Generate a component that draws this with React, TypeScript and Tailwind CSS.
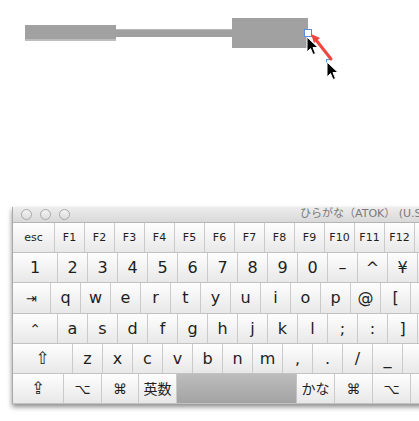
import type { ReactNode } from 'react'

type KeyDef = { w: string; label?: ReactNode; size?: string; kind?: 'space' }

const font = "font-['DejaVu_Sans','Noto_Sans_CJK_JP',sans-serif]"

const fRow: KeyDef[] = [
  { w: 'w-[42px]', label: 'esc' },
  ...['F1', 'F2', 'F3', 'F4', 'F5', 'F6', 'F7', 'F8', 'F9', 'F10', 'F11', 'F12', ''].map((l) => ({ w: 'w-[30px]', label: l })),
]

const numRow: KeyDef[] = [
  { w: 'w-[45px]', label: '1' },
  ...['2', '3', '4', '5', '6', '7', '8', '9', '0', '–', '^', '¥', ''].map((l) => ({ w: 'w-[30px]', label: l })),
]

const qRow: KeyDef[] = [
  { w: 'w-[38px]', label: '⇥', size: 'text-[13px]' },
  ...['q', 'w', 'e', 'r', 't', 'y', 'u', 'i', 'o', 'p', '@', '[', ''].map((l) => ({ w: 'w-[30px]', label: l })),
]

const aRow: KeyDef[] = [
  { w: 'w-[45px]', label: '⌃', size: 'text-[14px]' },
  ...['a', 's', 'd', 'f', 'g', 'h', 'j', 'k', 'l', ';', ':', ']', ''].map((l) => ({ w: 'w-[30px]', label: l })),
]

const zRow: KeyDef[] = [
  { w: 'w-[60px]', label: '⇧', size: 'text-[17px]' },
  ...['z', 'x', 'c', 'v', 'b', 'n', 'm', ',', '.', '/', '_', ''].map((l) => ({ w: 'w-[30px]', label: l })),
]

const bottomRow: KeyDef[] = [
  { w: 'w-[51px]', label: '⇪', size: 'text-[17px]' },
  { w: 'w-[38px]', label: '⌥', size: 'text-[14px]' },
  { w: 'w-[37px]', label: '⌘', size: 'text-[14px]' },
  { w: 'w-[38px]', label: '英数', size: 'text-[14px]' },
  { w: 'w-[120px]', kind: 'space' },
  { w: 'w-[38px]', label: 'かな', size: 'text-[14px]' },
  { w: 'w-[38px]', label: '⌘', size: 'text-[14px]' },
  { w: 'w-[38px]', label: '⌥', size: 'text-[14px]' },
  { w: 'w-[38px]', label: '' },
]

function Key({ k, small }: { k: KeyDef; small?: boolean }) {
  if (k.kind === 'space') {
    return <div className={`${k.w} shrink-0 border-r border-[#c4c4c4] bg-gradient-to-b from-[#bdbdbd] to-[#a3a3a3]`} />
  }
  return (
    <div
      className={`${k.w} ${k.size ?? (small ? 'text-[11px]' : 'text-[16px]')} flex shrink-0 items-center justify-center border-r border-[#cacaca] bg-gradient-to-b from-[#fefefe] to-[#e8e8e8] leading-none text-[#1e1e1e]`}
    >
      {k.label}
    </div>
  )
}

function Row({ keys, small, h }: { keys: KeyDef[]; small?: boolean; h: string }) {
  return (
    <div className={`flex ${h} border-b border-[#c2c2c2]`}>
      {keys.map((k, i) => (
        <Key key={i} k={k} small={small} />
      ))}
    </div>
  )
}

function Cursor({ className }: { className: string }) {
  return (
    <svg className={className} width="13" height="20" viewBox="0 0 13 20">
      <path d="M1 1 L1 16 L4.5 12.5 L7 18.5 L9.5 17.5 L7 11.5 L12 11.5 Z" fill="#000" stroke="#fff" strokeWidth="1" />
    </svg>
  )
}

function Light() {
  return <span className="h-[11px] w-[11px] rounded-full border border-[#a8a8a8] bg-gradient-to-b from-[#f4f4f4] to-[#dcdcdc]" />
}

export default function App() {
  return (
    <div className={`relative h-[421px] w-[419px] overflow-hidden bg-white ${font}`}>
      {/* canvas: the drawn shapes being resized */}
      <div className="relative h-[207px]">
        <div className="absolute left-[25px] top-[25px] h-[16px] w-[91px] border-b-2 border-[#bdbdbd] bg-[#a0a1a0]" />
        <div className="absolute left-[116px] top-[29px] h-[8px] w-[116px] border-t border-[#b8b8b8] bg-[#a0a0a0]" />
        <div className="absolute left-[232px] top-[18px] h-[30px] w-[76px] bg-[#a0a1a0]" />
        <div className="absolute left-[304px] top-[29px] h-[8px] w-[8px] border border-[#5b8de0] bg-white" />
        <div className="absolute left-[326px] top-[59px] h-[4px] w-[4px] border-l border-t border-[#5b8de0]" />
        <svg className="absolute left-0 top-0" width="419" height="100">
          <line x1="331" y1="59" x2="316" y2="40" stroke="#f2453d" strokeWidth="3" strokeLinecap="round" />
          <path d="M311 34 L320 38 L314 43 Z" fill="#f2453d" />
        </svg>
        <Cursor className="absolute left-[306px] top-[36px]" />
        <Cursor className="absolute left-[326px] top-[61px]" />
      </div>

      {/* keyboard viewer window */}
      <div className="ml-[12px] w-[470px] border-l border-[#a9a9a9] bg-[#cfcfcf] shadow-[0_3px_5px_rgba(0,0,0,0.45)]">
        <div className="flex h-[16px] items-center border-b border-[#b4b4b4] bg-gradient-to-b from-[#ededed] to-[#d9d9d9]">
          <div className="ml-[8px] flex gap-[8px]">
            <Light />
            <Light />
            <Light />
          </div>
          <span className="ml-[230px] whitespace-nowrap text-[11px] text-[#7a7a7a]">ひらがな（ATOK） (U.S.)</span>
        </div>
        <Row keys={fRow} small h="h-[30px]" />
        <Row keys={numRow} h="h-[30px]" />
        <Row keys={qRow} h="h-[31px]" />
        <Row keys={aRow} h="h-[30px]" />
        <Row keys={zRow} h="h-[30px]" />
        <Row keys={bottomRow} h="h-[30px]" />
      </div>
    </div>
  )
}
